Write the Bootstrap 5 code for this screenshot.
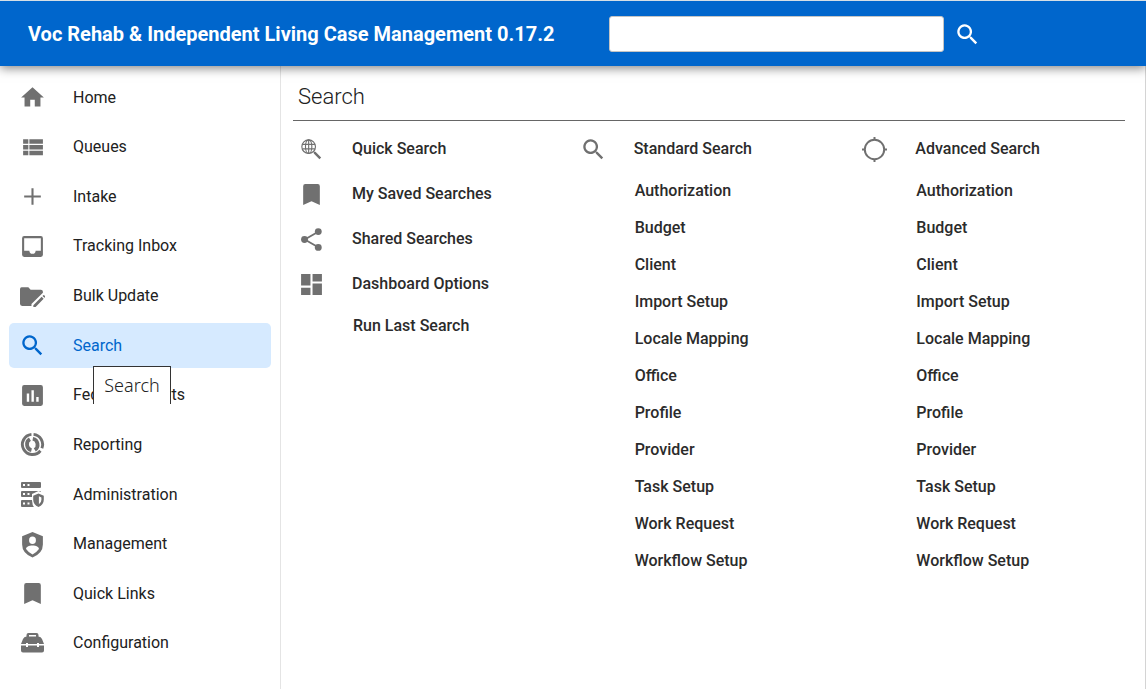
<!DOCTYPE html>
<html lang="en">
<head>
<meta charset="utf-8">
<meta name="viewport" content="width=device-width, initial-scale=1">
<title>Voc Rehab &amp; Independent Living Case Management</title>
<link href="https://cdn.jsdelivr.net/npm/bootstrap@5.3.0/dist/css/bootstrap.min.css" rel="stylesheet">
<style>
  body { font-family: Roboto, "Liberation Sans", sans-serif; font-size: 16px; line-height: 24px; color: #212121; background: #fff; }
  svg { fill: currentColor; display: block; flex: none; }
  .app-bar { height: 66px; background: #0066cc; border-top: 1px solid #d5dfe6; box-shadow: 0 2px 10px rgba(0,0,0,.5); z-index: 5; }
  .app-title { font-size: 20px; font-weight: 700; padding-left: 28px; width: 609px; }
  .app-search { width: 335px; height: 36px; border: 1px solid #c4c4c4; border-radius: 3px; }
  .app-go { padding: 2px 0 0; margin-left: 11px; border: 0; background: none; color: #fff; }
  .side { width: 281px; padding: 9px 9px 23px; border-right: 1px solid #e4e4e4; }
  .side-link { height: 45px; padding-left: 11px; gap: 28px; border-radius: 5px; color: inherit; text-decoration: none; font-weight: 400; }
  .side-link svg, .menu-link svg { color: #707070; }
  .side-link.current { background: #d6eaff; color: #0066cc; }
  .side-link.current svg { color: #0066cc; }
  .tip { top: 43px; left: 84px; width: 78px; height: 38px; border: 1px solid #333; border-bottom: 0; background: #fff; color: #222; font: 300 18px/36px "Noto Sans", "Open Sans", sans-serif; text-align: center; z-index: 3; }
  .main-pane { padding: 12px 7px 24px 12px; border-right: 1px solid #d4d4d4; }
  .main-title { font-size: 22px; line-height: 38px; font-weight: 300; padding: 0 5px 4px; margin: 0 13px 5px 0; border-bottom: 1px solid #666; }
  .menu-link { height: 45px; padding-left: 6px; gap: 28px; color: #2b2b2b; text-decoration: none; font-weight: 500; }
  .menu-link svg { margin-top: 2px; }
  .sub-link { display: flex; align-items: center; height: 37px; padding: 2px 0 0 60px; color: #2b2b2b; text-decoration: none; font-weight: 500; }
</style>
</head>
<body>
<div class="d-flex flex-column min-vh-100">
  <header class="app-bar d-flex align-items-center position-relative text-white">
    <div class="app-title">Voc Rehab &amp; Independent Living Case Management 0.17.2</div>
    <input class="app-search" type="search" aria-label="Search">
    <button class="app-go" type="button" aria-label="Run search"><svg width="25" height="25" viewBox="1 1 22 22"><path d="M15.500 14h-.79l-.28-.27A6.500 6.500 0 1 0 13.730 14.430l.27.28v.79l5 4.990L20.490 19zm-6 0a4.500 4.500 0 1 1 0-9 4.500 4.500 0 0 1 0 9z"/></svg></button>
  </header>
  <div class="d-flex flex-grow-1">
    <nav class="side d-flex flex-column justify-content-between flex-shrink-0" aria-label="Main">
      <a class="side-link d-flex align-items-center" href="#"><svg width="25" height="25" viewBox="1 1 22 22"><path d="M10 20v-6h4v6h5v-8h3L12 3 2 12h3v8z"/></svg>Home</a>
      <a class="side-link d-flex align-items-center" href="#"><svg width="25" height="25" viewBox="0 0 24 24"><path d="M3 4h5v4.500H3zM9 4h13v4.500H9zM3 9.500h5V14H3zM9 9.500h13V14H9zM3 15h5v4.500H3zM9 15h13v4.500H9z"/></svg>Queues</a>
      <a class="side-link d-flex align-items-center" href="#"><svg width="25" height="25" viewBox="0 0 24 24"><path d="M20 13h-7v7h-2v-7H4v-2h7V4h2v7h7z"/></svg>Intake</a>
      <a class="side-link d-flex align-items-center" href="#"><svg width="25" height="25" viewBox="0 0 24 24"><path d="M20 2H4a2 2 0 0 0-2 2v16a2 2 0 0 0 2 2h16a2 2 0 0 0 2-2V4a2 2 0 0 0-2-2zm0 14h-5a3 3 0 0 1-6 0H4V4h16z"/></svg>Tracking Inbox</a>
      <a class="side-link d-flex align-items-center" href="#"><svg width="25" height="25" viewBox="0 0 24 24"><path d="M1.500 3H8l2.200 2.500H20Q22 5.500 22 7.500V8.300L11 19.300V21H2Q0 21 0 19V5Q0 3 1.500 3zM12.800 20.300 20.800 12.300 22.700 14.200 15 22H12.800zM21.600 11.500l.8-.8q.4-.4.8 0l1 1q.4.4 0 .8l-.8.8z"/></svg>Bulk Update</a>
      <div class="position-relative">
        <a class="side-link current d-flex align-items-center" href="#" aria-current="page"><svg width="25" height="25" viewBox="1 1 22 22"><path d="M15.500 14h-.79l-.28-.27A6.500 6.500 0 1 0 13.730 14.430l.27.28v.79l5 4.990L20.490 19zm-6 0a4.500 4.500 0 1 1 0-9 4.500 4.500 0 0 1 0 9z"/></svg>Search</a>
        <div class="tip position-absolute" role="tooltip">Search</div>
      </div>
      <a class="side-link d-flex align-items-center" href="#"><svg width="25" height="25" viewBox="0 0 24 24"><path fill-rule="evenodd" d="M4 2h16a2 2 0 0 1 2 2v16a2 2 0 0 1-2 2H4a2 2 0 0 1-2-2V4a2 2 0 0 1 2-2zM6.500 10v8h2.300v-8zM11 7v11h2.300V7zM15.600 13.500V18h2.300v-4.500z"/></svg>Federal Reports</a>
      <a class="side-link d-flex align-items-center" href="#"><svg width="25" height="25" viewBox="0 0 24 24"><g fill="none" stroke="currentColor"><path d="M11 2.300A9.700 9.700 0 1 0 19.600 18M13 2.300A9.700 9.700 0 0 1 21 15.600" stroke-width="2.800"/><path d="M9.500 6.800A5.500 5.800 0 0 0 11 17.500M12.300 6.500A5.500 5.800 0 0 1 14.200 17.200" stroke-width="3.600"/></g></svg>Reporting</a>
      <a class="side-link d-flex align-items-center" href="#"><svg width="25" height="27" viewBox="0 0 25 27"><path fill-rule="evenodd" d="M2 1h18q1 0 1 1v4q0 1-1 1H2Q1 7 1 6V2q0-1 1-1zM3 3v2h2V3zM7.500 3v2h2V3zM2 10h18q1 0 1 1v4q0 1-1 1H2q-1 0-1-1v-4q0-1 1-1zM3 12v2h2v-2zM7.500 12v2h2v-2zM2 19h15v7H2q-1 0-1-1v-5q0-1 1-1zM3 21.500v2h2v-2zM7.500 21.500v2h2v-2z"/><path fill="#fff" d="M18.500 10 25 12.500V27H14.500Q12 24 12 19v-6z"/><path fill-rule="evenodd" d="M18.500 12.500l5.300 2.300v4q0 5-5.300 7.200-5.300-2.200-5.300-7.200v-4zM18.900 15.300v7.900q2.500-1.500 2.500-4.500v-2.300z"/></svg>Administration</a>
      <a class="side-link d-flex align-items-center" href="#"><svg width="25" height="27" viewBox="0 0 24 26"><path fill-rule="evenodd" d="M12 1 22 5v8q0 8.500-10 12.500Q2 21.500 2 13V5zM12 5.300a3.300 3.600 0 1 0 0 7.200 3.300 3.600 0 0 0 0-7.200zM12 14c-3.500 0-6.200 1.500-6.200 3.300Q8.500 21 12 22.700q3.500-1.700 6.200-5.400C18.200 15.500 15.500 14 12 14z"/></svg>Management</a>
      <a class="side-link d-flex align-items-center" href="#"><svg width="25" height="25" viewBox="0 0 24 24"><path d="M18 2H6a2 2 0 0 0-2 2v18l8-3.500L20 22V4a2 2 0 0 0-2-2z"/></svg>Quick Links</a>
      <a class="side-link d-flex align-items-center" href="#"><svg width="25" height="25" viewBox="0 0 25 25"><path fill-rule="evenodd" d="M6.500 5.500V4q0-2 2-2h8q2 0 2 2v1.500q2.500 0 3.500 2.500L24 13h-5v-1h-2v1H8v-1H6v1H1l2-5q1-2.500 3.500-2.500zM9 5.500h7V4H9zM1 14.500h5v1.500h2v-1.500h9V16h2v-1.500h5v5q0 2-2 2H3q-2 0-2-2z"/></svg>Configuration</a>
    </nav>
    <main class="main-pane flex-grow-1">
      <h1 class="main-title">Search</h1>
      <div class="row g-0">
        <div class="col-4">
          <a class="menu-link d-flex align-items-center" href="#"><svg width="25" height="25" viewBox="1 1 22 22"><path d="M15.500 14h-.79l-.28-.27-.7.7.27.28v.79l5 5L20.500 19z"/><g fill="none" stroke="currentColor" stroke-width="1"><circle cx="9.500" cy="9.500" r="6"/><ellipse cx="9.500" cy="9.500" rx="2.800" ry="6"/><path d="M9.500 3.500v12M4 7.500h11M4 11.500h11"/></g></svg>Quick Search</a>
          <a class="menu-link d-flex align-items-center" href="#"><svg width="25" height="25" viewBox="0 0 24 24"><path d="M18 2H6a2 2 0 0 0-2 2v18l8-3.500L20 22V4a2 2 0 0 0-2-2z"/></svg>My Saved Searches</a>
          <a class="menu-link d-flex align-items-center" href="#"><svg width="25" height="25" viewBox="0 0 24 24"><path d="M5.500 12 18.500 4.500M5.500 12l13 7.500" stroke="currentColor" stroke-width="1.800"/><circle cx="5.300" cy="12" r="3.300"/><circle cx="18.500" cy="4.400" r="3.300"/><circle cx="18.500" cy="19.600" r="3.300"/></svg>Shared Searches</a>
          <a class="menu-link d-flex align-items-center" href="#"><svg width="25" height="25" viewBox="0 0 24 24"><path d="M2 2h9v11H2zM2 15h9v7H2zM13 2h9v7h-9zM13 11h9v11h-9z"/></svg>Dashboard Options</a>
          <a class="sub-link" href="#">Run Last Search</a>
        </div>
        <div class="col-4">
          <a class="menu-link d-flex align-items-center" href="#"><svg width="25" height="25" viewBox="1 1 22 22"><path d="M15.500 14h-.79l-.28-.27A6.500 6.500 0 1 0 13.730 14.430l.27.28v.79l5 4.990L20.490 19zm-6 0a4.500 4.500 0 1 1 0-9 4.500 4.500 0 0 1 0 9z"/></svg>Standard Search</a>
          <a class="sub-link" href="#">Authorization</a>
          <a class="sub-link" href="#">Budget</a>
          <a class="sub-link" href="#">Client</a>
          <a class="sub-link" href="#">Import Setup</a>
          <a class="sub-link" href="#">Locale Mapping</a>
          <a class="sub-link" href="#">Office</a>
          <a class="sub-link" href="#">Profile</a>
          <a class="sub-link" href="#">Provider</a>
          <a class="sub-link" href="#">Task Setup</a>
          <a class="sub-link" href="#">Work Request</a>
          <a class="sub-link" href="#">Workflow Setup</a>
        </div>
        <div class="col-4">
          <a class="menu-link d-flex align-items-center" href="#"><svg width="25" height="25" viewBox="0 0 24 24"><g fill="none" stroke="currentColor" stroke-width="1.900"><circle cx="12" cy="12" r="9.300"/><path d="M12 0v3M12 21v3M0 12h3M21 12h3"/></g></svg>Advanced Search</a>
          <a class="sub-link" href="#">Authorization</a>
          <a class="sub-link" href="#">Budget</a>
          <a class="sub-link" href="#">Client</a>
          <a class="sub-link" href="#">Import Setup</a>
          <a class="sub-link" href="#">Locale Mapping</a>
          <a class="sub-link" href="#">Office</a>
          <a class="sub-link" href="#">Profile</a>
          <a class="sub-link" href="#">Provider</a>
          <a class="sub-link" href="#">Task Setup</a>
          <a class="sub-link" href="#">Work Request</a>
          <a class="sub-link" href="#">Workflow Setup</a>
        </div>
      </div>
    </main>
  </div>
</div>
<script src="https://cdn.jsdelivr.net/npm/bootstrap@5.3.0/dist/js/bootstrap.bundle.min.js"></script>
</body>
</html>
